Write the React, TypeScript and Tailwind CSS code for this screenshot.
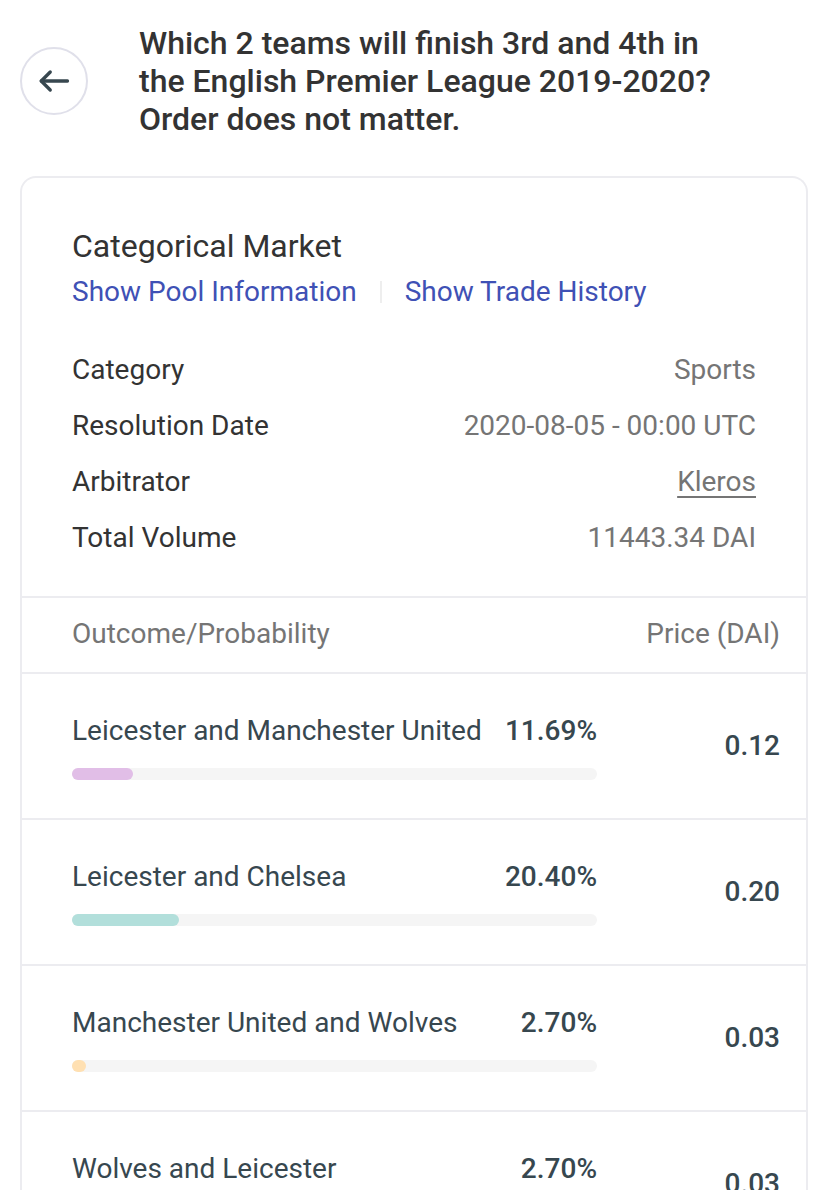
import React from "react";

const details = [
  { label: "Category", value: "Sports" },
  { label: "Resolution Date", value: "2020-08-05 - 00:00 UTC" },
  { label: "Arbitrator", value: "Kleros", link: true },
  { label: "Total Volume", value: "11443.34 DAI" },
];

const outcomes = [
  { name: "Leicester and Manchester United", prob: 11.69, price: "0.12", color: "bg-[#e1bee7]" },
  { name: "Leicester and Chelsea", prob: 20.4, price: "0.20", color: "bg-[#b2dfdb]" },
  { name: "Manchester United and Wolves", prob: 2.7, price: "0.03", color: "bg-[#ffe0b2]" },
  { name: "Wolves and Leicester", prob: 2.7, price: "0.03", color: "bg-[#c5cae9]" },
];

function BackButton() {
  return (
    <button className="mt-[23px] flex h-[68px] w-[68px] flex-shrink-0 items-center justify-center rounded-full border-2 border-[#e0e0ea] bg-white">
      <svg width="36" height="36" viewBox="0 0 24 24" fill="none" stroke="#37474f" strokeWidth="2.2" strokeLinecap="round" strokeLinejoin="round">
        <path d="M21 12H3.5" />
        <path d="M9.5 6l-6 6 6 6" />
      </svg>
    </button>
  );
}

export default function App() {
  return (
    <div className="h-[1190px] overflow-hidden bg-white font-['Roboto',sans-serif]">
      <header className="flex items-start gap-[51px] pl-[20px] pr-[20px] pt-[24px]">
        <BackButton />
        <h1 className="w-[590px] text-[32px] font-medium leading-[38px] text-[#333333]">
          Which 2 teams will finish 3rd and 4th in the English Premier League 2019-2020? Order does not matter.
        </h1>
      </header>

      <section className="mx-[20px] mt-[38px] rounded-t-[16px] border-2 border-b-0 border-[#ececf0]">
        <div className="px-[50px] pt-[48px] pb-[40px]">
          <h2 className="text-[32px] leading-[40px] text-[#333333]">Categorical Market</h2>
          <div className="mt-[8px] flex items-center text-[28px] leading-[36px] text-[#3f51b5]">
            <span>Show Pool Information</span>
            <span className="mx-[23px] h-[22px] w-[2px] bg-[#eeeeee]" />
            <span>Show Trade History</span>
          </div>
          <div className="mt-[42px] flex flex-col gap-[20px]">
            {details.map((d) => (
              <div key={d.label} className="flex items-center justify-between text-[28px] leading-[36px]">
                <span className="text-[#333333]">{d.label}</span>
                <span className={d.link ? "text-[#757575] underline underline-offset-[5px] decoration-[1.5px]" : "text-[#757575]"}>
                  {d.value}
                </span>
              </div>
            ))}
          </div>
        </div>

        <div className="flex items-center justify-between border-y-2 border-[#ececf0] pl-[50px] pr-[26px] pt-[18px] pb-[20px] text-[28px] leading-[36px] text-[#757575]">
          <span>Outcome/Probability</span>
          <span>Price (DAI)</span>
        </div>

        {outcomes.map((o) => (
          <div key={o.name} className="flex h-[146px] items-center border-b-2 border-[#ececf0] pl-[50px] pr-[26px]">
            <div className="w-[525px]">
              <div className="flex items-center justify-between text-[28px] leading-[36px] text-[#37474f]">
                <span>{o.name}</span>
                <span className="font-medium">{o.prob.toFixed(2)}%</span>
              </div>
              <div className="mt-[19px] h-[12px] w-full rounded-full bg-[#f5f5f5]">
                <div className={`h-full rounded-full ${o.color}`} style={{ width: `${Math.max(o.prob, 2.7)}%` }} />
              </div>
            </div>
            <div className="flex-1 text-right text-[28px] font-medium leading-[36px] text-[#37474f]">{o.price}</div>
          </div>
        ))}
      </section>
    </div>
  );
}
